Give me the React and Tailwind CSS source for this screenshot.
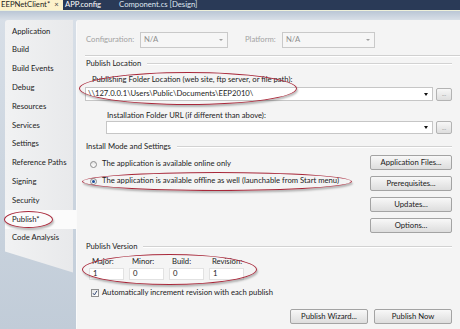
const sideItems = [
  "Application",
  "Build",
  "Build Events",
  "Debug",
  "Resources",
  "Services",
  "Settings",
  "Reference Paths",
  "Signing",
  "Security",
  "Publish*",
  "Code Analysis",
];

function Select({ width }) {
  return (
    <div
      className={`${width} h-[16px] flex items-center justify-between border border-[#c9c9c9] bg-[#f6f6f6] pl-[3px] pr-[4px] text-[#8e8e8e]`}
    >
      <span>N/A</span>
      <span className="w-0 h-0 border-l-[2px] border-r-[2px] border-t-[2px] border-l-transparent border-r-transparent border-t-[#a0a0a0]" />
    </div>
  );
}

function Heading({ children }) {
  return (
    <div className="h-[10px] flex items-center gap-[6px] pl-[1px]">
      <span className="whitespace-nowrap">{children}</span>
      <div className="flex-1 h-[2px] border-t border-[#d2d2d2] border-b border-b-white" />
    </div>
  );
}

function DotsButton({ h }) {
  return (
    <div
      className={`w-[16px] ${h} ml-[3px] rounded-[2px] border border-[#b3b3b3] bg-gradient-to-b from-[#f7f7f7] to-[#dedede] flex items-center justify-center text-[6px] text-[#8a8a8a] leading-none`}
    >
      ...
    </div>
  );
}

function PathInput({ value, h }) {
  return (
    <div className="flex items-center">
      <div
        className={`flex-1 ${h} bg-white border border-[#c6c6c6] flex items-center justify-between pl-[2px] pr-[4px]`}
      >
        <span className="whitespace-nowrap">{value}</span>
        <span className="w-0 h-0 border-l-[2px] border-r-[2px] border-t-[3px] border-l-transparent border-r-transparent border-t-[#111]" />
      </div>
      <DotsButton h="h-[13px]" />
    </div>
  );
}

function Btn({ children, w }) {
  return (
    <div
      className={`${w} h-[15px] rounded-[2px] border border-[#a3a3a3] bg-gradient-to-b from-[#f8f8f8] to-[#dddddd] flex items-center justify-center text-[#1a1a1a]`}
    >
      {children}
    </div>
  );
}

function Radio({ checked }) {
  return (
    <div className="w-[7px] h-[7px] shrink-0 rounded-full border border-[#8c8c8c] bg-gradient-to-b from-[#e4e4e4] to-white flex items-center justify-center">
      {checked && <div className="w-[3px] h-[3px] rounded-full bg-[#1d4f9c]" />}
    </div>
  );
}

function Ellipse({ className }) {
  return (
    <div
      className={`absolute rounded-[50%] border-[1.5px] border-[#a8283a] shadow-[1px_2px_2px_rgba(0,0,0,0.25)] pointer-events-none ${className}`}
    />
  );
}

export default function App() {
  return (
    <div className="relative w-[460px] h-[329px] overflow-hidden flex flex-col bg-gradient-to-b from-[#d9e0e8] to-[#c1ccd8] text-[7.7px] leading-none text-[#1c1c1c] font-['Lato','Liberation_Sans',sans-serif]">
      {/* document tabs */}
      <div className="h-[10px] bg-[#2a3a57] flex items-stretch">
        <div className="w-[63px] bg-[#fcf1cb] flex items-center pl-[1px] gap-[4px]">
          <span>EEPNetClient*</span>
          <span className="text-[#444]">×</span>
        </div>
        <span className="ml-[2px] self-center text-white">APP.config</span>
        <span className="ml-[18px] self-center text-[#dfe6f0]">Component.cs [Design]</span>
      </div>
      <div className="h-px bg-[#eef1da]" />
      <div className="h-[9px] bg-gradient-to-b from-[#bac6d5] to-[#d8dfe7]" />

      <div className="flex-1 flex">
        {/* side tabs */}
        <div className="w-[76px] flex flex-col">
          <div className="ml-[5px] w-[68px] pt-[2px] rounded-tl-[3px] bg-gradient-to-r from-[#f1f2f3] to-[#e8e9eb]">
            {sideItems.map((item) =>
              item === "Publish*" ? (
                <div
                  key={item}
                  className="w-[71px] h-[18.8px] bg-[#fbfbfb] flex items-center pl-[7px]"
                >
                  {item}
                </div>
              ) : (
                <div key={item} className="h-[18.8px] flex items-center pl-[7px] whitespace-nowrap">
                  {item}
                </div>
              )
            )}
          </div>
          <div className="ml-[5px] w-[68px] h-[25px] bg-gradient-to-r from-[#f1f2f3] to-[#e8e9eb] [clip-path:polygon(0_0,100%_0,100%_100%,0_16%)]" />
        </div>

        {/* property page */}
        <div className="flex-1 bg-[#f4f4f4] rounded-tl-[3px] border-l border-[#fafafa] pl-[8px] pr-[8px] flex flex-col">
          <div className="mt-[12px] h-[16px] flex items-center">
            <span className="w-[55px] pl-[1px] text-[#a3a3a3]">Configuration:</span>
            <Select width="w-[88px]" />
            <span className="ml-[17px] w-[37px] text-[#a3a3a3]">Platform:</span>
            <Select width="w-[93px]" />
          </div>
          <div className="mt-[7px] -mr-[8px] h-[2px] border-t border-[#d0d0d0] border-b border-b-white" />

          <div className="mt-[2px]">
            <Heading>Publish Location</Heading>
          </div>
          <div className="mt-[6px] h-[10px] flex items-center pl-[7px]">
            Publishing Folder Location (web site, ftp server, or file path):
          </div>
          <div className="mt-[2px]">
            <PathInput value="\\127.0.0.1\Users\Public\Documents\EEP2010\" h="h-[14px]" />
          </div>
          <div className="mt-[10px] h-[10px] flex items-center pl-[22px]">
            Installation Folder URL (if different than above):
          </div>
          <div className="pl-[21px]">
            <PathInput value="" h="h-[13px]" />
          </div>

          <div className="mt-[8px]">
            <Heading>Install Mode and Settings</Heading>
          </div>
          <div className="h-[90px] flex">
            <div className="flex-1 flex flex-col pl-[5px]">
              <div className="mt-[7px] h-[10px] flex items-center gap-[5px]">
                <Radio />
                <span>The application is available online only</span>
              </div>
              <div className="mt-[7px] h-[10px] flex items-center gap-[5px]">
                <Radio checked />
                <span className="whitespace-nowrap">
                  The application is available offline as well (launchable from Start menu)
                </span>
              </div>
            </div>
            <div className="w-[82px] pt-[3px] flex flex-col gap-[6px]">
              <Btn w="w-[82px]">Application Files...</Btn>
              <Btn w="w-[82px]">Prerequisites...</Btn>
              <Btn w="w-[82px]">Updates...</Btn>
              <Btn w="w-[82px]">Options...</Btn>
            </div>
          </div>

          <Heading>Publish Version</Heading>
          <div className="mt-[5px] pl-[4px] grid grid-cols-[35px_35px_35px_35px] gap-x-[5px]">
            {["Major:", "Minor:", "Build:", "Revision:"].map((l) => (
              <div key={l} className="h-[10px] flex items-center pl-[3px]">
                {l}
              </div>
            ))}
            {["1", "0", "0", "1"].map((v, i) => (
              <div
                key={i}
                className="mt-[1px] h-[12px] bg-white border border-[#e2e2e2] flex items-center pl-[3px]"
              >
                {v}
              </div>
            ))}
          </div>
          <div className="mt-[8px] h-[10px] flex items-center pl-[6px] gap-[3px]">
            <div className="w-[8px] h-[8px] border border-[#8f8f8f] bg-gradient-to-br from-[#e6e6e6] to-white flex items-center justify-center">
              <svg width="6" height="6" viewBox="0 0 6 6">
                <path d="M1 3.2 L2.4 5 L5 0.8" fill="none" stroke="#3b4e78" strokeWidth="1" />
              </svg>
            </div>
            <span>Automatically increment revision with each publish</span>
          </div>
          <div className="mt-[11px] flex justify-end gap-[6px]">
            <Btn w="w-[78px]">Publish Wizard...</Btn>
            <Btn w="w-[78px]">Publish Now</Btn>
          </div>
        </div>
      </div>

      <Ellipse className="left-[79px] top-[72px] w-[218px] h-[33px]" />
      <Ellipse className="left-[82px] top-[172px] w-[270px] h-[19px]" />
      <Ellipse className="left-[4px] top-[211px] w-[49px] h-[17px]" />
      <Ellipse className="left-[82px] top-[254px] w-[175px] h-[31px]" />
    </div>
  );
}
